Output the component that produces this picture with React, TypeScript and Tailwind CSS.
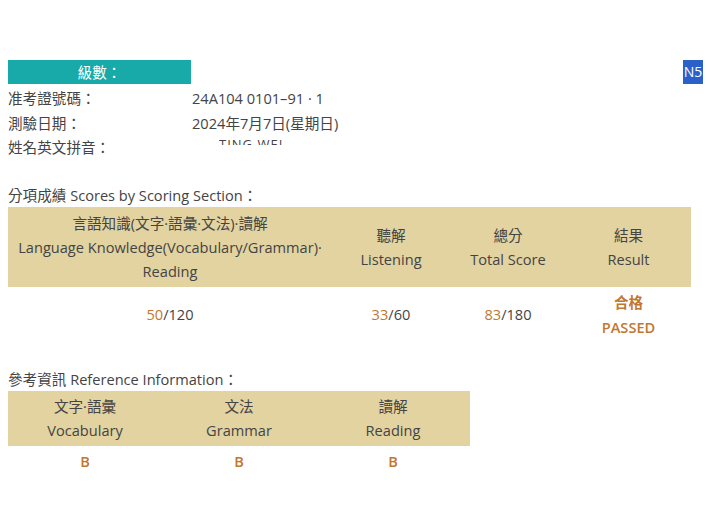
import React from 'react';

const font = "font-['Open_Sans','Noto_Sans_CJK_TC',sans-serif]";

const Score = ({ got, total }: { got: string; total: string }) => (
  <span>
    <span className="text-[#c2772f]">{got}</span>/{total}
  </span>
);

export default function App() {
  return (
    <div className={`w-[710px] h-[528px] bg-white text-[#444] text-[14.6px] ${font}`}>
      <div className="pt-[60px] px-2 flex justify-between items-start">
        <div className="w-[183px] h-[24px] bg-[#17aaa8] text-white text-center leading-[24px]">級數：</div>
        <div className="w-[20px] h-[24px] bg-[#2a61c9] text-white text-[14px] leading-[24px] text-center mr-[-1px]">N5</div>
      </div>

      <div className="px-2 mt-[2px] leading-[24.5px]">
        <div className="flex">
          <div className="w-[184px]">准考證號碼：</div>
          <div>24A104 0101–91 · 1</div>
        </div>
        <div className="flex">
          <div className="w-[184px]">測驗日期：</div>
          <div>2024年7月7日(星期日)</div>
        </div>
        <div className="flex">
          <div className="w-[184px]">姓名英文拼音：</div>
          <div className="pl-[27px] pt-[3px]">
            <div className="h-[7px] overflow-hidden text-[13px] leading-[13px] tracking-[1px]">TING WEI</div>
          </div>
        </div>
      </div>

      <div className="px-2 mt-[23px]">
        <div className="leading-[24px]">分項成績 Scores by Scoring Section：</div>
        <div className="w-[683px] grid grid-cols-[324px_118px_116px_125px] bg-[#e2d3a1] text-center leading-[24px] py-[4px]">
          <div>
            <div>言語知識(文字·語彙·文法)·讀解</div>
            <div>Language Knowledge(Vocabulary/Grammar)·</div>
            <div>Reading</div>
          </div>
          <div className="flex flex-col justify-center">
            <div>聽解</div>
            <div>Listening</div>
          </div>
          <div className="flex flex-col justify-center">
            <div>總分</div>
            <div>Total Score</div>
          </div>
          <div className="flex flex-col justify-center">
            <div>結果</div>
            <div>Result</div>
          </div>
        </div>
        <div className="w-[683px] grid grid-cols-[324px_118px_116px_125px] text-center items-center leading-[25px] pt-[3px]">
          <Score got="50" total="120" />
          <Score got="33" total="60" />
          <Score got="83" total="180" />
          <div className="text-[#c2772f] font-semibold">
            <div>合格</div>
            <div>PASSED</div>
          </div>
        </div>
      </div>

      <div className="px-2 mt-[27px]">
        <div className="leading-[24px]">參考資訊 Reference Information：</div>
        <div className="w-[462px] grid grid-cols-3 bg-[#e2d3a1] text-center leading-[24.5px] py-[3px]">
          <div>
            <div>文字·語彙</div>
            <div>Vocabulary</div>
          </div>
          <div>
            <div>文法</div>
            <div>Grammar</div>
          </div>
          <div>
            <div>讀解</div>
            <div>Reading</div>
          </div>
        </div>
        <div className="w-[462px] grid grid-cols-3 text-center text-[#c2772f] font-semibold leading-[24px] pt-[3px]">
          <div>B</div>
          <div>B</div>
          <div>B</div>
        </div>
      </div>
    </div>
  );
}
